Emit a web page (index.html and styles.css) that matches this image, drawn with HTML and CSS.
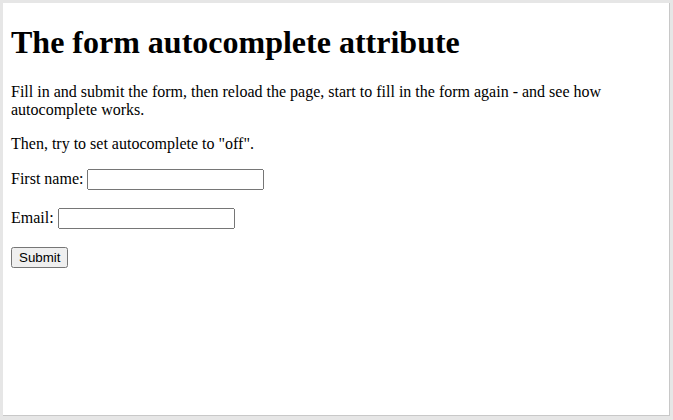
FILE: index.html
```html
<!DOCTYPE html>
<html>
<head>
<meta charset="utf-8">
<title>The form autocomplete attribute</title>
<link rel="stylesheet" href="styles.css">
</head>
<body>
<div class="frame">
  <div class="page">
    <h1>The form autocomplete attribute</h1>
    <p>Fill in and submit the form, then reload the page, start to fill in the form again - and see how autocomplete works.</p>
    <p>Then, try to set autocomplete to "off".</p>
    <form class="form" autocomplete="on">
      First name: <input type="text" class="field" name="fname"><br><br>
      Email: <input type="email" class="field" name="email"><br><br>
      <input type="submit" class="submit" value="Submit">
    </form>
  </div>
</div>
</body>
</html>
```

FILE: styles.css
```css
html, body {
  margin: 0;
  padding: 0;
  height: 100%;
}
body {
  background: #e6e6e6;
  box-sizing: border-box;
  padding: 3px 3px 3px 3px;
}
.frame {
  display: flow-root;
  background: #ffffff;
  height: 413px;
  width: 667px;
  box-sizing: border-box;
  border-right: 1px solid #c8c8c8;
  border-bottom: 1px solid #c8c8c8;
  font-family: "Liberation Serif", "Times New Roman", serif;
  font-size: 16px;
  color: #000;
}
.page {
  margin: 8px;
}
h1 {
  font-size: 32px;
  font-weight: bold;
  margin: 21.44px 0;
}
p {
  margin: 16px 0;
}
.field {
  font-family: "Liberation Sans", Arial, sans-serif;
  font-size: 13.333px;
  width: 177px;
  box-sizing: border-box;
}
.submit {
  font-family: "Liberation Sans", Arial, sans-serif;
  font-size: 13.333px;
}
```
